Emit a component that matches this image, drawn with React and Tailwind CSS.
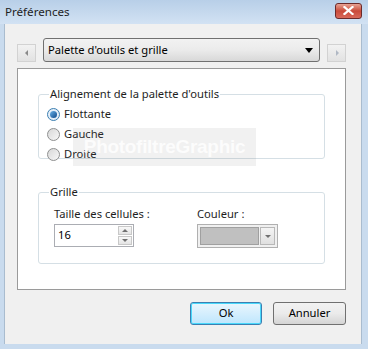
import React from "react";

function Radio({ checked, label }) {
  return (
    <div className="flex items-center h-[20px]">
      <div className={"w-[13px] h-[13px] rounded-full border flex items-center justify-center " + (checked ? "border-[#3c7fb1] bg-[#e4eef8]" : "border-[#8e8f8f] bg-gradient-to-br from-[#d8d8d8] to-[#f8f8f8]")}>
        {checked && <div className="w-[7px] h-[7px] rounded-full bg-gradient-to-br from-[#6ab2e8] to-[#0d4a8a]" />}
      </div>
      <span className="ml-[4px] text-[#1e1e1e]">{label}</span>
    </div>
  );
}

function ArrowBtn({ dir }) {
  return (
    <div className="w-[19px] h-[18px] border border-[#d2d2d2] bg-gradient-to-b from-[#f2f2f2] to-[#e2e2e2] flex items-center justify-center">
      <svg width="4" height="6" viewBox="0 0 4 6">
        {dir === "left" ? <path d="M3 0 L0 3 L3 6 Z" fill="#8a8a8a" /> : <path d="M1 0 L4 3 L1 6 Z" fill="#b0b8c4" />}
      </svg>
    </div>
  );
}

export default function App() {
  return (
    <div className="w-[368px] h-[349px] flex flex-col bg-[#c9dbee] text-[11.2px] overflow-hidden" style={{ fontFamily: '"Segoe UI", "Noto Sans", sans-serif' }}>
      <div className="h-[24px] flex items-center justify-between pl-[5px] pr-[6px] bg-gradient-to-b from-[#b8cfe8] to-[#d2e2f3] shrink-0">
        <span className="text-[11.6px] text-[#1e1e1e]">Préférences</span>
        <div className="w-[27px] h-[16px] mt-[-3px] rounded-[3px] border border-[#6b2a2a] bg-gradient-to-b from-[#e6a294] via-[#c94a3a] to-[#d8695a] flex items-center justify-center">
          <svg width="11" height="9" viewBox="0 0 11 9">
            <path d="M1.5 1 L9.5 8 M9.5 1 L1.5 8" stroke="#ffffff" strokeWidth="2.2" strokeLinecap="square" />
          </svg>
        </div>
      </div>
      <div className="flex-1 flex flex-col ml-[4px] mr-[6px] mb-[5px] bg-[#f0f0f0] border-x border-[#a9bccf] pl-[12px] pr-[15px] pt-[14px]">
        <div className="flex items-end h-[24px] gap-[7px]">
          <ArrowBtn dir="left" />
          <div className="flex-1 h-[24px] rounded-[3px] border border-[#707070] bg-gradient-to-b from-[#f2f2f2] via-[#ebebeb] to-[#d8d8d8] flex items-center justify-between pl-[4px] pr-[6px]">
            <span className="text-[#000]">Palette d'outils et grille</span>
            <svg width="8" height="5" viewBox="0 0 8 5"><path d="M0 0 L8 0 L4 5 Z" fill="#000" /></svg>
          </div>
          <ArrowBtn dir="right" />
        </div>
        <div className="relative mt-[6px] h-[222px] bg-white border border-[#9a9a9a] px-[20px] pt-[25px]">
          <div className="relative border border-[#d5dfe5] rounded-[3px] h-[65px] pl-[8px] pt-[9px]">
            <span className="absolute left-[10px] top-[-9px] bg-white px-[1px] text-[#1e1e1e]">Alignement de la palette d'outils</span>
            <Radio checked label="Flottante" />
            <Radio label="Gauche" />
            <Radio label="Droite" />
          </div>
          <div className="relative mt-[33px] border border-[#d5dfe5] rounded-[3px] h-[72px] pl-[15px] pt-[13px] flex">
            <span className="absolute left-[10px] top-[-9px] bg-white px-[1px] text-[#1e1e1e]">Grille</span>
            <div className="flex flex-col w-[143px]">
              <span className="leading-[16px] text-[#1e1e1e]">Taille des cellules :</span>
              <div className="mt-[2px] w-[80px] h-[23px] border border-[#abadb3] flex items-center bg-white">
                <span className="pl-[3px] flex-1">16</span>
                <div className="flex flex-col mr-[1px] gap-[1px]">
                  <div className="w-[14px] h-[9px] border border-[#c8c8c8] bg-gradient-to-b from-[#f8f8f8] to-[#e4e4e4] flex items-center justify-center">
                    <svg width="6" height="3" viewBox="0 0 6 3"><path d="M0 3 L6 3 L3 0 Z" fill="#707070" /></svg>
                  </div>
                  <div className="w-[14px] h-[9px] border border-[#c8c8c8] bg-gradient-to-b from-[#f8f8f8] to-[#e4e4e4] flex items-center justify-center">
                    <svg width="6" height="3" viewBox="0 0 6 3"><path d="M0 0 L6 0 L3 3 Z" fill="#707070" /></svg>
                  </div>
                </div>
              </div>
            </div>
            <div className="flex flex-col">
              <span className="leading-[16px] text-[#1e1e1e]">Couleur :</span>
              <div className="mt-[2px] w-[81px] h-[24px] border border-[#b0b0b0] p-[2px] flex gap-[1px] bg-[#f0f0f0]">
                <div className="flex-1 bg-[#c0c0c0] border border-[#a0a0a0]" />
                <div className="w-[15px] border border-[#b8b8b8] bg-gradient-to-b from-[#f4f4f4] to-[#e0e0e0] flex items-center justify-center">
                  <svg width="6" height="3" viewBox="0 0 6 3"><path d="M0 0 L6 0 L3 3 Z" fill="#707070" /></svg>
                </div>
              </div>
            </div>
          </div>
          <div className="absolute left-[55px] top-[59px] w-[183px] h-[38px] bg-[rgba(120,120,120,0.10)] flex items-center justify-center pointer-events-none">
            <span className="text-[19px] font-bold text-white tracking-[-0.3px] opacity-80" style={{ fontFamily: '"Liberation Sans", sans-serif' }}>PhotofiltreGraphic</span>
          </div>
        </div>
        <div className="flex justify-end gap-[11px] mt-[12px]">
          <div className="w-[72px] h-[23px] rounded-[3px] border border-[#3c7fb1] bg-gradient-to-b from-[#eaf6fd] to-[#bee6fd] flex items-center justify-center shadow-[inset_0_0_0_1px_#48d8fb]">
            <span className="text-[#000]">Ok</span>
          </div>
          <div className="w-[73px] h-[23px] rounded-[3px] border border-[#707070] bg-gradient-to-b from-[#f2f2f2] via-[#ebebeb] to-[#d4d4d4] flex items-center justify-center">
            <span className="text-[#000]">Annuler</span>
          </div>
        </div>
      </div>
    </div>
  );
}
